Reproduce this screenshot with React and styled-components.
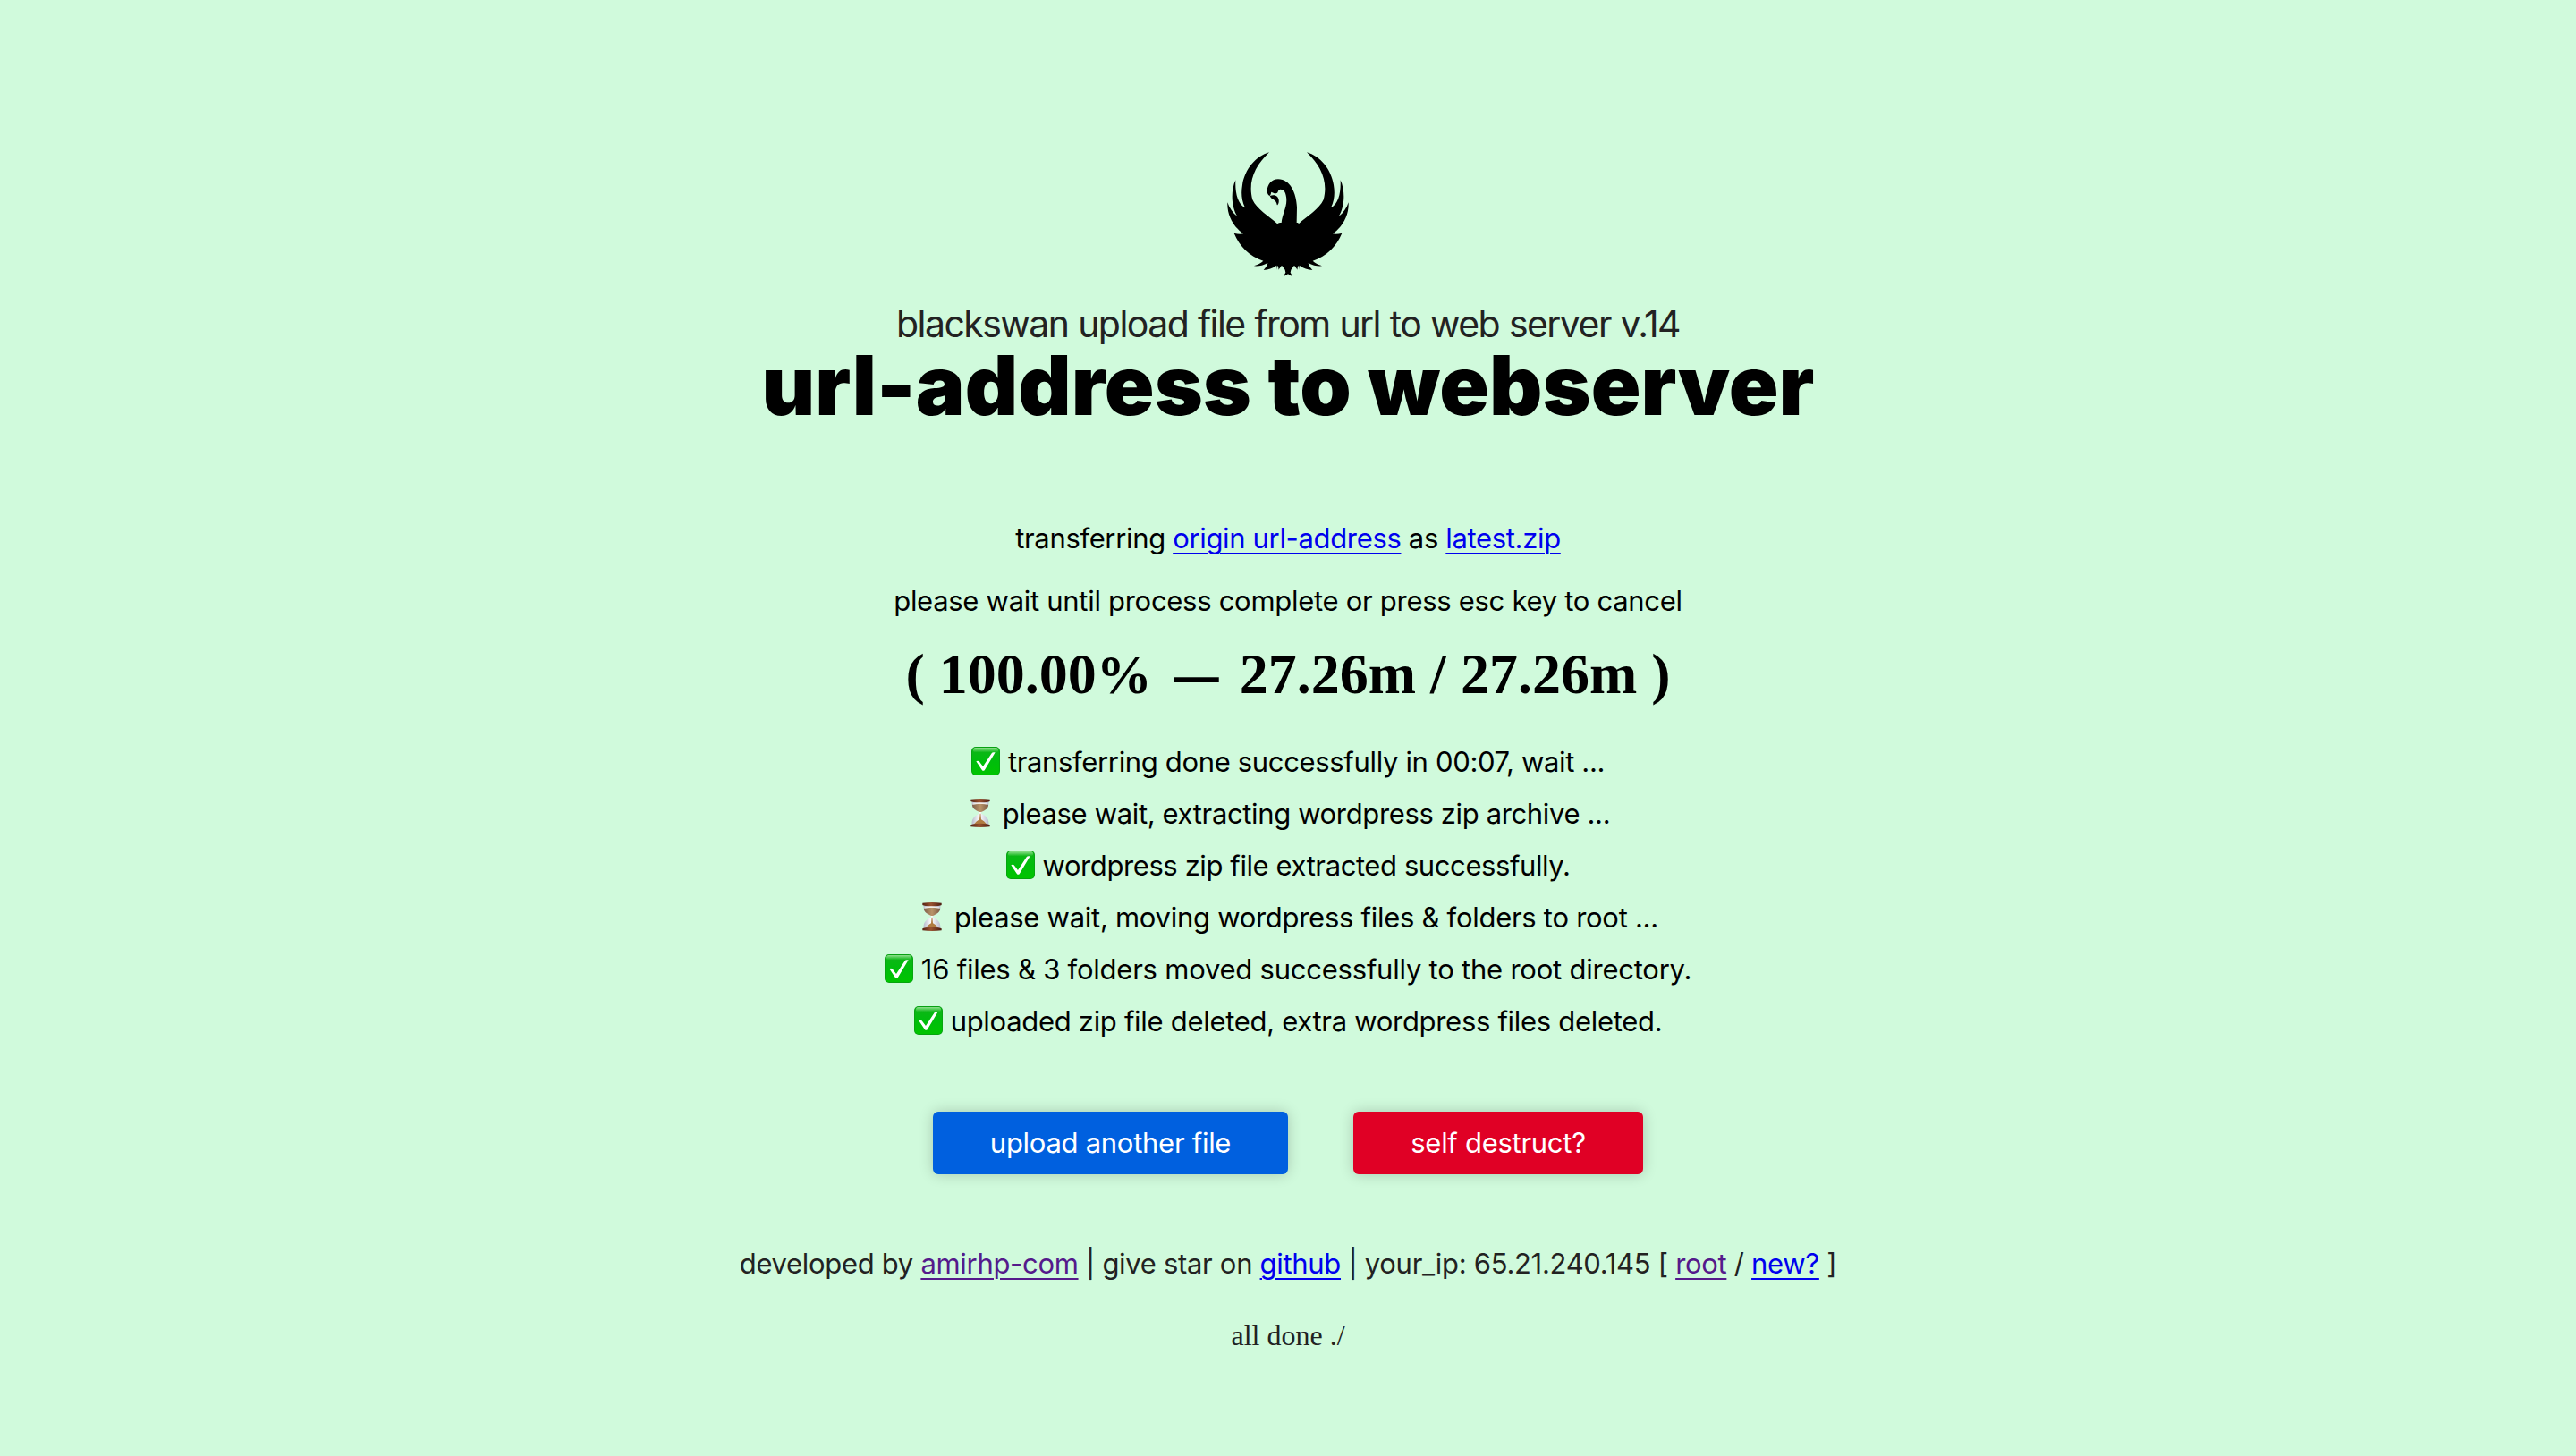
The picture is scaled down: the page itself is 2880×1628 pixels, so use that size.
import React from "react";
import styled, { createGlobalStyle } from "styled-components";

const GlobalStyle = createGlobalStyle`
  body {
    margin: 0;
    background: #d0fadc;
    color: #000;
  }
`;

const sans = `Inter, "Liberation Sans", sans-serif`;
const serif = `"Liberation Serif", serif`;

const Page = styled.main`
  box-sizing: border-box;
  min-height: 1628px;
  padding-top: 160px;
  display: flex;
  flex-direction: column;
  align-items: center;
  white-space: pre;
`;

const Logo = styled.svg`
  width: 160px;
  height: 160px;
  display: block;
`;

const Subtitle = styled.div`
  margin-top: 18px;
  font: 430 41px/48px ${sans};
  letter-spacing: -1.56px;
  word-spacing: 0.8px;
  color: #222;
`;

const Title = styled.h1`
  margin: 0;
  font: 900 92px/90px ${sans};
  letter-spacing: 0.08px;
`;

const Line = styled.p`
  margin: ${(p) => p.$top}px 0 0;
  font: 400 31px/58px ${sans};
  letter-spacing: ${(p) => p.$tracking || -0.31}px;
  color: ${(p) => (p.$muted ? "#222" : "#000")};
`;

const Link = styled.a`
  color: ${(p) => (p.$visited ? "#551a8b" : "#0000ee")};
  text-decoration: underline;
  text-decoration-thickness: 2px;
  text-underline-offset: 5px;
`;

const Progress = styled.h2`
  margin: 16px 0 0;
  display: flex;
  align-items: baseline;
  font: 700 64px/74px ${serif};
`;

const Percent = styled.span`
  font-size: 62px;
`;

const Dash = styled.span`
  margin: 0 23px 0 25px;
  font: 700 50px/50px ${sans};
`;

const StatusList = styled.ul`
  margin: 32px 0 0;
  padding: 0;
  list-style: none;
  display: flex;
  flex-direction: column;
  align-items: center;
`;

const StatusRow = styled.li`
  height: 58px;
  display: flex;
  align-items: center;
  gap: 9px;
  font: 400 31px/58px ${sans};
  letter-spacing: ${(p) => p.$tracking}px;
`;

const Emoji = styled.svg`
  width: 32px;
  height: 32px;
  margin-bottom: 2px;
`;

const Actions = styled.div`
  margin-top: 72px;
  display: flex;
  gap: 73px;
`;

const Button = styled.button`
  width: ${(p) => p.$width}px;
  height: 70px;
  padding: 0;
  border: 0;
  border-radius: 6px;
  background: ${(p) => p.$color};
  color: #fff;
  font: 400 31px/70px ${sans};
  letter-spacing: -0.28px;
  box-shadow: 0 0 16px rgba(0, 0, 0, 0.2);
`;

const Done = styled.div`
  margin-top: 22px;
  font: 400 32px/58px ${serif};
  color: #222;
`;

const half =
  "M240 438C237 442 233 445 225 446L232 434L230 425L219 410L208 425C209 420 208 415 205 410L201 425C202 418 202 413 202 410C188 421 174 424 158 426C166 417 171 409 172 402C157 411 141 413 125 412C139 408 149 402 157 395C110 380 77 345 59 302C70 305 80 306 90 304C56 280 35 240 37 199C43 217 54 234 70 246C50 214 47 162 64 124C62 166 71 205 96 217C83 190 83 165 87 140C95 88 132 44 177 31C128 78 105 130 121 190C134 220 176 246 206 272L240 262Z";

const SwanLogo = () => (
  <Logo viewBox="0 0 480 480">
    <path d={half} />
    <path d={half} transform="translate(480 0) scale(-1 1)" />
    <path d="M204 272C207 268 212 267 218 267C221 236 239 212 234 181C232 163 225 155 215 155C205 155 208 166 202 168C196 171 190 166 184 164C183 168 182 173 179 177C173 176 170 168 170 159C171 139 185 121 207 121C247 121 268 167 270 215L269 267C273 267 277 269 278 272L240 290Z" />
    <path d="M179 177C189 173 199 174 204 180C211 188 211 201 205 208C202 208 203 200 198 195C192 188 184 188 179 177Z" />
  </Logo>
);

const CheckEmoji = () => (
  <Emoji viewBox="0 0 96 96">
    <defs>
      <linearGradient id="green" x1="0" y1="0" x2="0" y2="1">
        <stop offset="0" stopColor="#10b41a" />
        <stop offset="0.5" stopColor="#00bd0c" />
        <stop offset="1" stopColor="#00c400" />
      </linearGradient>
      <linearGradient id="gloss" x1="0" y1="0" x2="0" y2="1">
        <stop offset="0" stopColor="#8de08c" />
        <stop offset="1" stopColor="#8de08c" stopOpacity="0" />
      </linearGradient>
    </defs>
    <rect width="96" height="96" rx="15" fill="#079a12" />
    <rect x="2" y="2" width="92" height="92" rx="13" fill="url(#green)" />
    <rect x="6" y="3" width="84" height="16" rx="8" fill="url(#gloss)" />
    <path d="M16 49Q21 45 26 49L39 66L68 22Q70 19 74 19H80L45 77Q40 84 35 77Z" fill="#fff" />
  </Emoji>
);

const HourglassEmoji = () => (
  <Emoji viewBox="0 0 96 96">
    <defs>
      <linearGradient id="wood" x1="0" x2="1">
        <stop offset="0" stopColor="#542112" />
        <stop offset="0.45" stopColor="#9a5331" />
        <stop offset="1" stopColor="#4c1c10" />
      </linearGradient>
      <linearGradient id="glass" x1="0" x2="1">
        <stop offset="0" stopColor="#b9bccb" />
        <stop offset="0.45" stopColor="#ffffff" />
        <stop offset="1" stopColor="#b9bccf" />
      </linearGradient>
      <linearGradient id="sand" x1="0" x2="1">
        <stop offset="0" stopColor="#80614a" />
        <stop offset="0.5" stopColor="#b99469" />
        <stop offset="1" stopColor="#7c5a42" />
      </linearGradient>
    </defs>
    <path d="M20 10H76C78 28 70 37 51 46V50C68 57 78 68 76 87H20C18 68 28 57 45 50V46C26 37 18 28 20 10Z" fill="url(#glass)" />
    <path d="M21 20Q48 15 75 20C75 33 65 38 51 45H45C31 38 21 33 21 20Z" fill="url(#sand)" />
    <path d="M23 18Q48 14 73 18" stroke="#f3eee6" strokeWidth="3" fill="none" />
    <path d="M47 50H49L51 70Q60 74 70 86H26Q36 74 45 70Z" fill="#b07c42" />
    <path d="M16 2Q48 -2 80 2V9Q75 13 48 13T16 9Z" fill="url(#wood)" />
    <path d="M16 88Q21 83 48 83T80 88V94Q48 98 16 94Z" fill="url(#wood)" />
  </Emoji>
);

const statuses = [
  { done: true, tracking: -0.34, text: "transferring done successfully in 00:07, wait ..." },
  { done: false, tracking: -0.36, text: "please wait, extracting wordpress zip archive ..." },
  { done: true, tracking: -0.41, text: "wordpress zip file extracted successfully." },
  { done: false, tracking: -0.28, text: "please wait, moving wordpress files & folders to root ..." },
  { done: true, tracking: -0.23, text: "16 files & 3 folders moved successfully to the root directory." },
  { done: true, tracking: -0.3, text: "uploaded zip file deleted, extra wordpress files deleted." },
];

export default function App() {
  return (
    <>
      <GlobalStyle />
      <Page>
        <SwanLogo />
        <Subtitle>blackswan upload file from url to web server v.14</Subtitle>
        <Title>url-address to webserver</Title>
        <Line $top={97} $tracking={-0.34}>
          transferring <Link>origin url-address</Link> as <Link>latest.zip</Link>
        </Line>
        <Line $top={12} $tracking={-0.29}>please wait until process complete or press esc key to cancel</Line>
        <Progress>
          <span>( 100.00<Percent>%</Percent></span>
          <Dash>—</Dash>
          <span>27.26m / 27.26m )</span>
        </Progress>
        <StatusList>
          {statuses.map((s) => (
            <StatusRow key={s.text} $tracking={s.tracking}>
              {s.done ? <CheckEmoji /> : <HourglassEmoji />}
              <span>{s.text}</span>
            </StatusRow>
          ))}
        </StatusList>
        <Actions>
          <Button $width={397} $color="#0060df">upload another file</Button>
          <Button $width={324} $color="#e00025">self destruct?</Button>
        </Actions>
        <Line $top={71} $muted>
          developed by <Link $visited>amirhp-com</Link> | give star on <Link>github</Link> | your_ip: 65.21.240.145 [ <Link $visited>root</Link> / <Link>new?</Link> ]
        </Line>
        <Done>all done ./</Done>
      </Page>
    </>
  );
}
